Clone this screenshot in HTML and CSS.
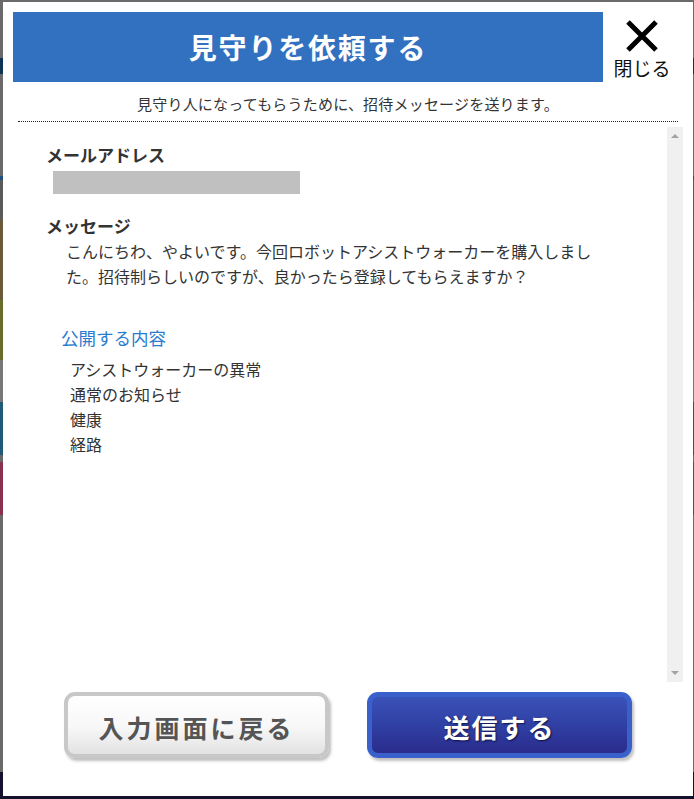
FILE: index.html
```html
<!DOCTYPE html>
<html lang="ja">
<head>
<meta charset="utf-8">
<title>見守りを依頼する</title>
<link rel="stylesheet" href="styles.css">
</head>
<body>
<div class="modal">
  <div class="head">
    <h1 class="title">見守りを依頼する</h1>
    <div class="close">
      <svg class="close-x" width="34" height="32" viewBox="0 0 34 32"><path d="M3 2 L31 30 M31 2 L3 30" stroke="#000" stroke-width="5" fill="none"/></svg>
      <span class="close-label">閉じる</span>
    </div>
  </div>
  <p class="lead">見守り人になってもらうために、招待メッセージを送ります。</p>
  <div class="scroller">
    <div class="content">
      <h2 class="label">メールアドレス</h2>
      <div class="mailbox"></div>
      <h2 class="label label-msg">メッセージ</h2>
      <p class="message">こんにちわ、やよいです。今回ロボットアシストウォーカーを購入しました。招待制らしいのですが、良かったら登録してもらえますか？</p>
      <h3 class="pub">公開する内容</h3>
      <ul class="items">
        <li>アシストウォーカーの異常</li>
        <li>通常のお知らせ</li>
        <li>健康</li>
        <li>経路</li>
      </ul>
    </div>
    <div class="sbar">
      <span class="arrow up"></span>
      <span class="arrow down"></span>
    </div>
  </div>
  <div class="actions">
    <button class="btn btn-back">入力画面に戻る</button>
    <button class="btn btn-send">送信する</button>
  </div>
</div>
</body>
</html>
```

FILE: styles.css
```css
html, body {
  margin: 0;
  padding: 0;
}
body {
  width: 694px;
  height: 799px;
  overflow: hidden;
  font-family: "Noto Sans CJK JP", "Noto Sans", sans-serif;
  color: #333;
  background:
    linear-gradient(to bottom,
      #6a6a6a 0, #6a6a6a 58px,
      #0d3553 58px, #0d3553 74px,
      #6a6a6a 74px, #6a6a6a 176px,
      #1f4f80 176px, #1f4f80 180px,
      #5a5a5a 180px, #5a5a5a 220px,
      #6b5a3a 220px, #6b5a3a 300px,
      #6a6d2a 300px, #6a6d2a 360px,
      #777 360px, #777 402px,
      #1f5a78 402px, #1f5a78 455px,
      #6a6a6a 455px, #6a6a6a 462px,
      #8a3050 462px, #8a3050 515px,
      #6a6a6a 515px, #6a6a6a 772px,
      #14112e 772px);
}
.modal {
  margin: 2px 0 0 3px;
  width: 690px;
  height: 794px;
  background: #fff;
  display: flex;
  flex-direction: column;
}
.head {
  display: flex;
  align-items: flex-start;
  margin: 10px 0 0 10px;
}
.title {
  margin: 0;
  width: 590px;
  height: 70px;
  background: #3271c0;
  color: #fff;
  font-size: 28px;
  font-weight: bold;
  letter-spacing: 1.8px;
  display: flex;
  align-items: center;
  justify-content: center;
}
.close {
  display: flex;
  flex-direction: column;
  align-items: center;
  width: 74px;
  margin-left: 2px;
  margin-top: 8px;
}
.close-x {
  display: block;
}
.close-label {
  font-size: 19px;
  line-height: 22px;
  color: #111;
  margin-top: 5px;
}
.lead {
  margin: 11px 15px 0;
  padding-bottom: 6px;
  border-bottom: 1px dotted #222;
  text-align: center;
  font-size: 15px;
  letter-spacing: 0.2px;
  line-height: 22px;
  color: #333;
}
.scroller {
  display: flex;
  height: 560px;
  margin: 0 10px 0 15px;
}
.content {
  flex: 1;
  padding: 21px 0 0 28px;
}
.label {
  margin: 0;
  font-size: 17px;
  line-height: 24px;
  font-weight: bold;
  color: #333;
}
.mailbox {
  margin: 4px 0 0 7px;
  width: 247px;
  height: 23px;
  background: #c0c0c0;
}
.label-msg {
  margin-top: 20px;
}
.message {
  margin: 1px 0 0 20px;
  width: 536px;
  font-size: 16px;
  line-height: 25px;
  color: #333;
}
.pub {
  margin: 37px 0 0 15px;
  font-size: 17.5px;
  line-height: 24px;
  font-weight: normal;
  color: #2b7ccf;
}
.items {
  list-style: none;
  margin: 7px 0 0 24px;
  padding: 0;
  font-size: 16px;
  line-height: 25px;
  color: #333;
}
.sbar {
  width: 16px;
  margin-top: 5px;
  background: #f0f0f0;
  display: flex;
  flex-direction: column;
  justify-content: space-between;
  align-items: center;
  padding: 7px 0;
}
.arrow {
  width: 0;
  height: 0;
  border-left: 4px solid transparent;
  border-right: 4px solid transparent;
}
.arrow.up {
  border-bottom: 4px solid #a3a3a3;
}
.arrow.down {
  border-top: 4px solid #a3a3a3;
}
.actions {
  display: flex;
  justify-content: center;
  gap: 38px;
  margin-top: 10px;
}
.btn {
  width: 265px;
  height: 66px;
  border-radius: 11px;
  font-family: "Noto Sans CJK JP", sans-serif;
  font-weight: bold;
  font-size: 25px;
  letter-spacing: 3px;
  padding: 3px 0 0;
  cursor: pointer;
  box-shadow: 2px 3px 3px rgba(0,0,0,0.25);
}
.btn-back {
  border: 4px solid #c8c8c8;
  background: linear-gradient(to bottom, #ffffff 0%, #f7f7f7 55%, #e2e2e2 100%);
  color: #555;
}
.btn-send {
  border: 5px solid #3a60cc;
  background: linear-gradient(to bottom, #3a52b8 0%, #3040a4 50%, #2a2c8c 100%);
  color: #fff;
  font-size: 26px;
  letter-spacing: 2px;
  text-shadow: 1px 1px 2px rgba(0,0,30,0.7);
}
```
